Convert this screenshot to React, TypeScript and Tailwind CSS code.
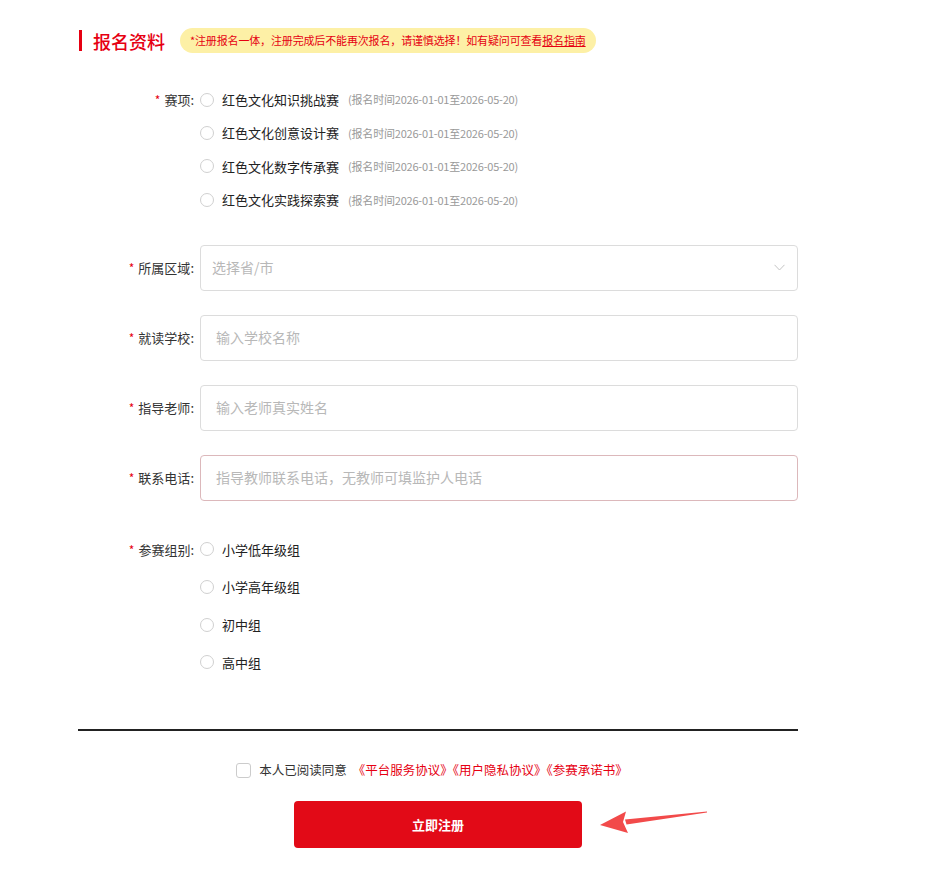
import React from 'react'

const events = ['红色文化知识挑战赛', '红色文化创意设计赛', '红色文化数字传承赛', '红色文化实践探索赛']
const groups = ['小学低年级组', '小学高年级组', '初中组', '高中组']

function Label({ text }: { text: string }) {
  return (
    <div className="w-[122px] shrink-0 flex items-center justify-end pr-[6px] text-[13px] text-[#333]">
      <span className="text-[#e60012] mr-[4px] text-[12px]">*</span>
      {text}:
    </div>
  )
}

function Radio() {
  return <span className="w-[14px] h-[14px] rounded-full border border-[#d0d0d0] bg-white shrink-0" />
}

function Field({ label, placeholder, select, pink }: { label: string; placeholder: string; select?: boolean; pink?: boolean }) {
  return (
    <div className="flex items-center">
      <Label text={label} />
      <div
        className={`w-[598px] h-[46px] rounded-[4px] border bg-white flex items-center justify-between ${select ? 'pl-[11px] pr-[12px]' : 'px-[15px]'} ${pink ? 'border-[#dcb8bb]' : 'border-[#dcdcdc]'}`}
      >
        <span className="text-[14px] text-[#b8b8b8]">{placeholder}</span>
        {select && (
          <svg width="11" height="7" viewBox="0 0 11 7" fill="none">
            <path d="M0.5 0.8L5.5 6L10.5 0.8" stroke="#c4c4c4" strokeWidth="1" />
          </svg>
        )}
      </div>
    </div>
  )
}

export default function App() {
  return (
    <main className="min-h-screen bg-white pl-[78px] pt-[28px] pb-[24px] font-['Noto_Sans_CJK_SC','Noto_Sans',sans-serif]">
      <div className="w-[720px]">
        {/* Title */}
        <div className="flex items-center h-[25px]">
          <span className="w-[3px] h-[21px] bg-[#e60012] ml-[1px]" />
          <h2 className="ml-[11px] text-[18px] leading-none font-medium text-[#e60012]">报名资料</h2>
          <div className="ml-[15px] h-[25px] px-[10px] rounded-full bg-[#fdf0a6] flex items-center text-[11px] tracking-[-0.15px] text-[#e60012]">
            *注册报名一体，注册完成后不能再次报名，请谨慎选择！如有疑问可查看
            <span className="underline">报名指南</span>
          </div>
        </div>

        {/* Events */}
        <div className="mt-[30px] flex">
          <div className="w-[122px] shrink-0 h-[34px] flex items-center justify-end pr-[6px] text-[13px] text-[#333]">
            <span className="text-[#e60012] mr-[4px] text-[12px]">*</span>赛项:
          </div>
          <div className="flex flex-col">
            {events.map((e) => (
              <div key={e} className="h-[33.4px] flex items-center">
                <Radio />
                <span className="ml-[8px] text-[13px] text-[#222]">{e}</span>
                <span className="ml-[9px] text-[11px] tracking-[-0.2px] text-[#999]">(报名时间2026-01-01至2026-05-20)</span>
              </div>
            ))}
          </div>
        </div>

        {/* Inputs */}
        <div className="mt-[28px] flex flex-col gap-[24px]">
          <Field label="所属区域" placeholder="选择省/市" select />
          <Field label="就读学校" placeholder="输入学校名称" />
          <Field label="指导老师" placeholder="输入老师真实姓名" />
          <Field label="联系电话" placeholder="指导教师联系电话，无教师可填监护人电话" pink />
        </div>

        {/* Groups */}
        <div className="mt-[30px] flex">
          <div className="w-[122px] shrink-0 h-[38px] flex items-center justify-end pr-[6px] text-[13px] text-[#333]">
            <span className="text-[#e60012] mr-[4px] text-[12px]">*</span>参赛组别:
          </div>
          <div className="flex flex-col">
            {groups.map((g) => (
              <div key={g} className="h-[37.7px] flex items-center">
                <Radio />
                <span className="ml-[8px] text-[13px] text-[#222]">{g}</span>
              </div>
            ))}
          </div>
        </div>

        <div className="mt-[48px] h-[2px] bg-[#222]" />

        {/* Agreement */}
        <div className="mt-[30px] flex items-center justify-center pr-[12px]">
          <span className="w-[15px] h-[15px] rounded-[3px] border border-[#ccc] bg-white" />
          <span className="ml-[8px] text-[12.5px] text-[#333]">本人已阅读同意</span>
          <span className="ml-[6px] text-[12.5px] text-[#e60012]">《平台服务协议》《用户隐私协议》《参赛承诺书》</span>
        </div>

        <div className="relative mt-[21px] flex justify-center">
          <button className="w-[288px] h-[47px] rounded-[4px] bg-[#e20a17] text-white text-[13px] font-bold">
            立即注册
          </button>
          <svg className="absolute left-[521px] top-[8px]" width="110" height="26" viewBox="0 0 110 26" fill="none">
            <path d="M108 2.5L26 10.5L27.5 15.5L108 3.6Z" fill="#f24a4a" />
            <path d="M1 16L27 2.5L24 13L29 24Z" fill="#f24a4a" />
          </svg>
        </div>
      </div>
    </main>
  )
}
